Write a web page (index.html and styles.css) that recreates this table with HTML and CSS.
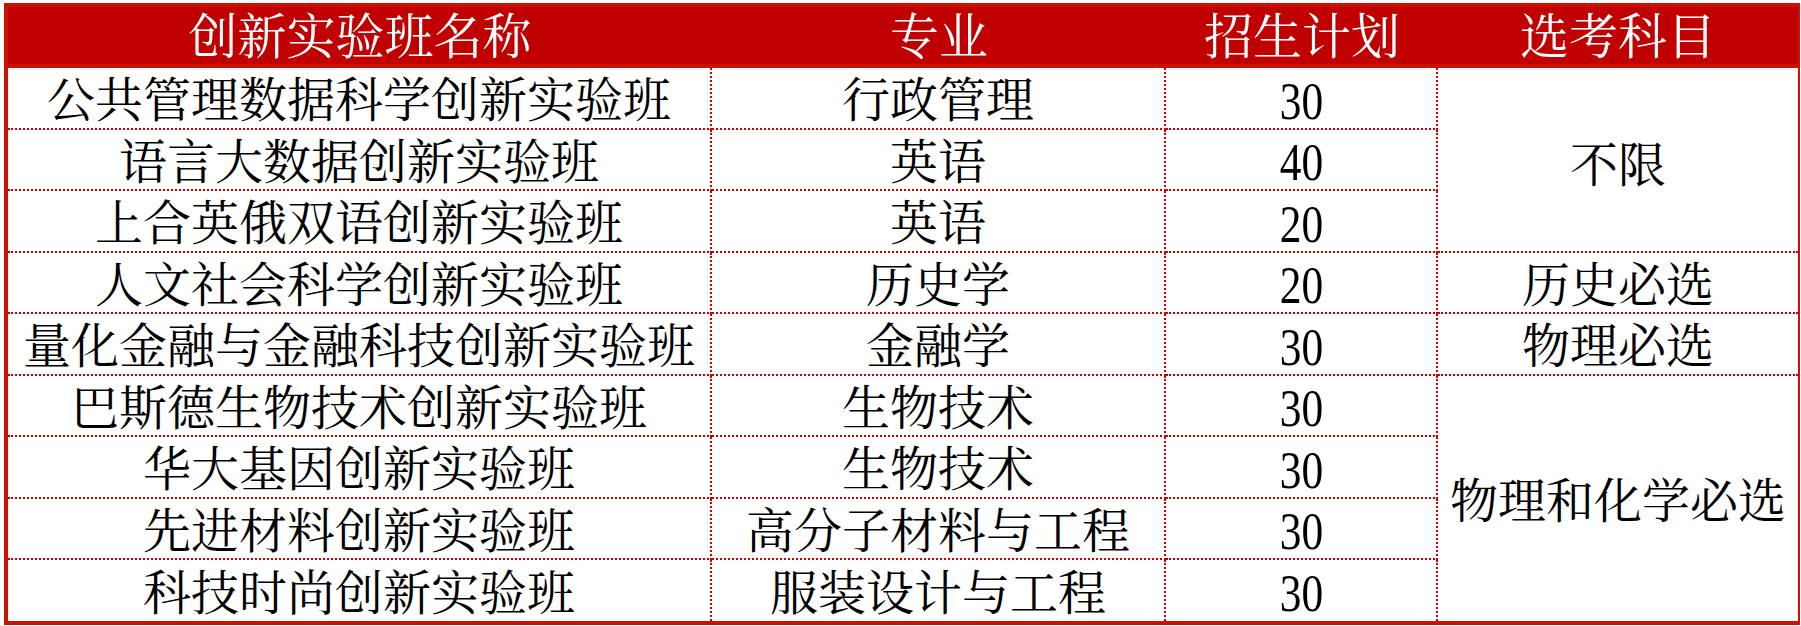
FILE: index.html
```html
<!DOCTYPE html>
<html lang="zh-CN">
<head>
<meta charset="utf-8">
<title>创新实验班招生计划</title>
<link rel="stylesheet" href="styles.css">
</head>
<body>
<table class="plan">
  <thead>
    <tr class="head">
      <th class="c1">创新实验班名称</th>
      <th class="c2">专业</th>
      <th class="c3">招生计划</th>
      <th class="c4">选考科目</th>
    </tr>
  </thead>
  <tbody>
    <tr class="h62">
      <td>公共管理数据科学创新实验班</td>
      <td>行政管理</td>
      <td><span class="num">30</span></td>
      <td rowspan="3" class="subj s-none">不限</td>
    </tr>
    <tr class="h61">
      <td>语言大数据创新实验班</td>
      <td>英语</td>
      <td><span class="num">40</span></td>
    </tr>
    <tr class="h62">
      <td>上合英俄双语创新实验班</td>
      <td>英语</td>
      <td><span class="num">20</span></td>
    </tr>
    <tr class="h61">
      <td>人文社会科学创新实验班</td>
      <td>历史学</td>
      <td><span class="num">20</span></td>
      <td class="subj">历史必选</td>
    </tr>
    <tr class="h62">
      <td>量化金融与金融科技创新实验班</td>
      <td>金融学</td>
      <td><span class="num">30</span></td>
      <td class="subj">物理必选</td>
    </tr>
    <tr class="h61">
      <td>巴斯德生物技术创新实验班</td>
      <td>生物技术</td>
      <td><span class="num">30</span></td>
      <td rowspan="4" class="subj s-phys last">物理和化学必选</td>
    </tr>
    <tr class="h62">
      <td>华大基因创新实验班</td>
      <td>生物技术</td>
      <td><span class="num">30</span></td>
    </tr>
    <tr class="h61">
      <td>先进材料创新实验班</td>
      <td>高分子材料与工程</td>
      <td><span class="num">30</span></td>
    </tr>
    <tr class="h61 final">
      <td>科技时尚创新实验班</td>
      <td>服装设计与工程</td>
      <td><span class="num">30</span></td>
    </tr>
  </tbody>
</table>
</body>
</html>
```

FILE: styles.css
```css
html, body {
  margin: 0;
  padding: 0;
  background: #ffffff;
}

.plan {
  margin: 3px 0 0 4px;
  width: 1796px;
  table-layout: fixed;
  border-collapse: separate;
  border-spacing: 0;
  border-top: 4px solid #cc1100;
  border-left: 4px solid #cc1100;
  border-bottom: 4px solid #cc1100;
  border-right: 2px solid #cc1100;
  font-family: "Liberation Serif", "Noto Serif CJK SC", "Noto Sans CJK SC", serif;
  font-size: 48px;
  line-height: 1;
  color: #000000;
}

.head th {
  box-sizing: border-box;
  height: 61px;
  padding: 3px 0 0 0;
  background: #c00000;
  color: #ffffff;
  font-size: 49px;
  font-weight: normal;
  text-align: center;
  vertical-align: middle;
  white-space: nowrap;
  border-bottom: 4px solid #cc1100;
}

.head .c1 { width: 704px; }
.head .c2 { width: 454px; }
.head .c3 { width: 272px; }
.head .c4 { width: 360px; }

.plan td {
  box-sizing: border-box;
  padding: 6px 0 0 0;
  text-align: center;
  vertical-align: middle;
  white-space: nowrap;
  border-right: 2px dotted #cc0000;
  border-bottom: 2px dotted #cc0000;
}

.plan td.subj {
  border-right: none;
}

.plan tr.final td,
.plan td.last {
  border-bottom: none;
}

.h62 { height: 62px; }
.h61 { height: 61px; }

.plan td.s-none {
  padding-top: 12px;
}

.plan td.s-phys {
  padding: 6px 0 0 0;
}

.num {
  display: inline-block;
  font-size: 53px;
  line-height: 1;
  transform: scaleX(0.82);
}
```
